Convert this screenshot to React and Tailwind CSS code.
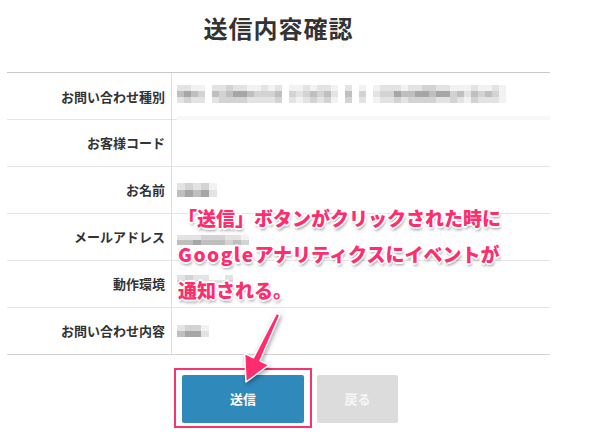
import React from "react";

const shades = {
  ".": "bg-transparent",
  "1": "bg-[#f2f2f2]",
  "2": "bg-[#e3e3e3]",
  "3": "bg-[#d3d3d3]",
  "4": "bg-[#bfbfbf]",
  "5": "bg-[#a6a6a6]",
};

// blurred (mosaic) values, one string per pixel row
const Mosaic = ({ rows, cell = "w-[7px]", h = "h-[6px]" }) => (
  <div className="flex flex-col">
    {rows.map((r, i) => (
      <div key={i} className="flex">
        {r.split("").map((c, j) => (
          <div key={j} className={`${cell} ${h} ${shades[c]}`} />
        ))}
      </div>
    ))}
  </div>
);

const rows = [
  {
    label: "お問い合わせ種別",
    value: (
      <div className="flex flex-col gap-[13px] pt-[12px]">
        <Mosaic
          rows={[
            "2211.2232211212.1121221.2.1.1222122332211121121.",
            "4543.4345543334.3234342.4.3.2335445545534243431.",
            "2322.2333322223.2123231.3.2.1223233332232132221.",
          ]}
        />
        <div className="h-[4px] w-[373px] bg-[#f7f7f7]" />
      </div>
    ),
  },
  { label: "お客様コード", value: null },
  {
    label: "お名前",
    value: (
      <Mosaic
        cell="w-[8px]"
        h="h-[7px]"
        rows={["23231", "45452"]}
      />
    ),
  },
  {
    label: "メールアドレス",
    value: (
      <div className="pt-[6px]">
        <Mosaic
          cell="w-[8px]"
          h="h-[5px]"
          rows={["222333221", "445444343"]}
        />
      </div>
    ),
  },
  {
    label: "動作環境",
    value: (
      <div className="-mt-[8px]">
        <Mosaic cell="w-[8px]" h="h-[5px]" rows={["2322..2", "3332223"]} />
      </div>
    ),
  },
  {
    label: "お問い合わせ内容",
    value: (
      <Mosaic cell="w-[8px]" h="h-[6px]" rows={["2331", "4552"]} />
    ),
  },
];

export default function App() {
  return (
    <div className="relative w-[600px] h-[435px] overflow-hidden bg-white font-['Noto_Sans_CJK_JP',sans-serif] text-[#333]">
      {/* Title */}
      <div className="h-[72px] pt-[12px] pl-[7px] w-[550px]">
        <h1 className="text-center text-[24px] leading-[32px] font-bold tracking-[1px] text-[#333]">
          送信内容確認
        </h1>
      </div>

      {/* Table */}
      <div className="ml-[7px] w-[543px] border-t border-[#c8c8c8]">
        {rows.map((r, i) => (
          <div
            key={r.label}
            className={`grid grid-cols-[165px_1fr] h-[47px] border-b ${
              i === rows.length - 1 ? "border-[#d4d4d4]" : "border-[#e4e4e4]"
            }`}
          >
            <div className="flex items-center justify-end pr-[6px] border-r border-[#dedede] text-[13px] font-bold">
              {r.label}
            </div>
            <div className="flex items-center pl-[5px]">{r.value}</div>
          </div>
        ))}
      </div>

      {/* Buttons */}
      <div className="flex mt-[20px] pl-[182px] gap-[13px]">
        <button className="w-[122px] h-[48px] rounded-[2px] bg-[#2f89bb] text-white text-[13px] font-bold">
          送信
        </button>
        <button className="w-[81px] h-[48px] rounded-[2px] bg-[#dcdcdc] text-[#f7f7f7] text-[13px] font-bold">
          戻る
        </button>
      </div>

      {/* Annotation overlay */}
      <div className="absolute left-[174px] top-[368px] w-[138px] h-[60px] border-2 border-[#f8336f]" />

      <div className="absolute left-[178px] top-[200px] text-[19px] leading-[36px] font-black text-[#ff2d6e] whitespace-nowrap [text-shadow:1px_1px_0_#fff,-1px_-1px_0_#fff,1px_-1px_0_#fff,-1px_1px_0_#fff,0_2px_0_#fff,2px_0_0_#fff,-2px_0_0_#fff,0_-2px_0_#fff,1px_3px_3px_rgba(0,0,0,0.4)]">
        <p>「送信」ボタンがクリックされた時に</p>
        <p>
          <span className="tracking-[1.5px]">Google</span>アナリティクスにイベントが
        </p>
        <p>通知される。</p>
      </div>

      <svg
        className="absolute left-0 top-0 pointer-events-none drop-shadow-[1px_2px_2px_rgba(0,0,0,0.35)]"
        width="600"
        height="435"
        viewBox="0 0 600 435"
      >
        <polygon
          points="276.5,313.2 280,314.8 260,360.8 269,365.2 246,382 244.6,353.4 253.4,357.8"
          fill="#ff2d6e"
          stroke="#fff"
          strokeWidth="1.5"
          strokeLinejoin="round"
        />
      </svg>
    </div>
  );
}
